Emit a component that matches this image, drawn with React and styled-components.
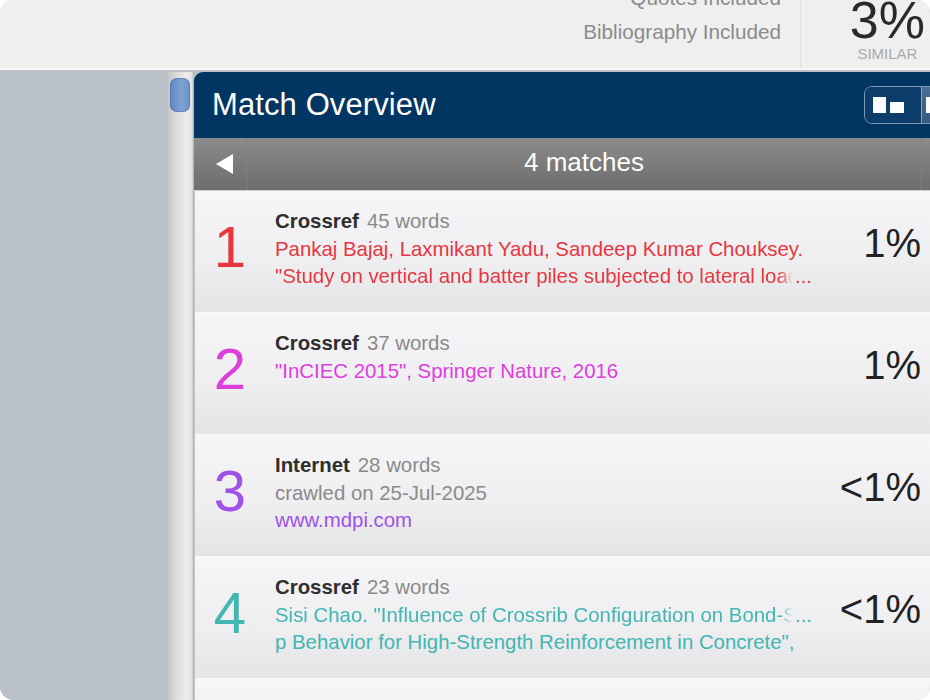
import styled, { createGlobalStyle } from "styled-components";

const GlobalStyle = createGlobalStyle`
    html, body {
        margin:0;
        padding:0;
        background:#ffffff;
    }
    body {
        font-family:"Liberation Sans", Arial, sans-serif;
    }
`;

const Frame = styled.div`
    width:930px;
    height:700px;
    border-radius:14px;
    overflow:hidden;
    display:flex;
    flex-direction:column;
    background:#b9c0c8;
`;

const TopBar = styled.div`
    height:68px;
    flex-shrink:0;
    display:flex;
    justify-content:flex-end;
    align-items:flex-end;
    background:#efefef;
    border-bottom:2px solid #f8f8f8;
    overflow:hidden;
`;

const Filters = styled.div`
    display:flex;
    flex-direction:column;
    align-items:flex-end;
    padding-right:19px;
    padding-bottom:19px;
`;

const FilterLine = styled.div`
    font-size:20.7px;
    line-height:34px;
    color:#8b8b8b;
    white-space:nowrap;
`;

const Score = styled.div`
    width:130px;
    height:100%;
    display:flex;
    justify-content:flex-end;
    align-items:flex-end;
    border-left:1px solid #e2e2e2;
    padding-right:5px;
    padding-bottom:6px;
    box-sizing:border-box;
`;

const ScoreInner = styled.div`
    display:flex;
    flex-direction:column;
    align-items:center;
`;

const ScoreValue = styled.div`
    font-size:52px;
    line-height:52px;
    color:#2a2a2a;
`;

const ScoreLabel = styled.div`
    font-size:15px;
    line-height:16px;
    color:#a9a9a9;
`;

const Body = styled.div`
    flex:1;
    display:flex;
    min-height:0;
    padding-top:2px;
`;

const SideArea = styled.div`
    width:168px;
    flex-shrink:0;
    background:#b9c0c8;
`;

const Track = styled.div`
    position:relative;
    width:26px;
    flex-shrink:0;
    background:linear-gradient(to right, #c6c6c6 0%, #dedede 35%, #ececec 70%, #e2e2e2 92%, #a8a8a8 100%);
`;

const Thumb = styled.div`
    position:absolute;
    left:2px;
    top:6px;
    width:20px;
    height:34px;
    border-radius:7px;
    background:linear-gradient(to right, #5f87c0, #7ea2d4 55%, #6c92c9);
    box-shadow:inset 0 0 0 1px rgba(60,90,140,0.35);
`;

const Panel = styled.div`
    flex:1;
    display:flex;
    flex-direction:column;
    min-width:0;
    overflow:hidden;
`;

const PanelHeader = styled.div`
    height:66px;
    flex-shrink:0;
    display:flex;
    align-items:center;
    justify-content:space-between;
    background:#013562;
    border-top-left-radius:9px;
    padding-left:18px;
`;

const PanelTitle = styled.div`
    font-size:31px;
    color:#ffffff;
    letter-spacing:0.1px;
`;

const Toggle = styled.div`
    display:flex;
    height:38px;
    width:80px;
    margin-right:-14px;
    border:1.5px solid #7d97b4;
    border-radius:8px;
    overflow:hidden;
    box-sizing:border-box;
`;

const ToggleSeg = styled.div`
    width:${p => p.$w}px;
    flex-shrink:0;
    display:flex;
    align-items:center;
    padding-left:${p => p.$pad}px;
    gap:4px;
    background:${p => p.$active ? "linear-gradient(#4b6e95, #36597f)" : "#0c3c69"};
    border-right:${p => p.$active ? "none" : "1px solid #8aa2bd"};
`;

const Block = styled.div`
    width:${p => p.$w}px;
    height:${p => p.$h}px;
    margin-top:${p => p.$mt || 0}px;
    background:#ffffff;
`;

const NavBar = styled.div`
    height:52px;
    flex-shrink:0;
    display:flex;
    align-items:stretch;
    background:linear-gradient(#8b8b8b, #6d6d6d);
    border-bottom:1px solid #cfcfcf;
`;

const NavBack = styled.div`
    width:53px;
    display:flex;
    align-items:center;
    padding-left:22px;
    box-sizing:border-box;
    border-right:1px solid #808080;
`;

const BackArrow = styled.div`
    width:0;
    height:0;
    border-top:10px solid transparent;
    border-bottom:10px solid transparent;
    border-right:17px solid #ffffff;
`;

const NavTitle = styled.div`
    flex:1;
    display:flex;
    align-items:center;
    justify-content:center;
    font-size:26px;
    color:#ffffff;
    padding-bottom:4px;
    border-right:1px solid #808080;
`;

const NavEnd = styled.div`
    width:8px;
`;

const Rows = styled.div`
    flex:1;
    display:flex;
    flex-direction:column;
    border-left:1px solid #c4c4c4;
`;

const Row = styled.div`
    height:121px;
    flex-shrink:0;
    display:flex;
    background:linear-gradient(#f6f6f8, #eeeef0 60%, #e3e4e6);
    border-bottom:1px solid #fbfbfb;
`;

const Num = styled.div`
    width:70px;
    flex-shrink:0;
    text-align:center;
    font-size:58px;
    line-height:58px;
    padding-top:27px;
    color:${p => p.$color};
`;

const Info = styled.div`
    width:537px;
    flex-shrink:0;
    margin-left:10px;
    padding-top:17px;
    font-size:20.4px;
    line-height:27.5px;
`;

const Line = styled.div`
    display:flex;
    white-space:nowrap;
    color:${p => p.$color || "#8a8a8a"};
`;

const Source = styled.span`
    font-weight:bold;
    color:#2e2e2e;
    margin-right:8px;
`;

const Words = styled.span`
    color:#8a8a8a;
`;

const Clip = styled.span`
    flex:1;
    min-width:0;
    overflow:hidden;
    -webkit-mask-image:linear-gradient(to right, #000 calc(100% - 14px), transparent);
    mask-image:linear-gradient(to right, #000 calc(100% - 14px), transparent);
`;

const Dots = styled.span`
    flex-shrink:0;
    margin-left:2px;
`;

const Percent = styled.div`
    flex:1;
    text-align:right;
    padding-right:9px;
    padding-top:32px;
    font-size:40px;
    line-height:40px;
    color:#222222;
`;

const matches = [
    {
        n: 1,
        color: "#e8363f",
        source: "Crossref",
        words: "45 words",
        pct: "1%",
        lines: [
            { text: "Pankaj Bajaj, Laxmikant Yadu, Sandeep Kumar Chouksey.", color: "#e8363f" },
            { text: "\"Study on vertical and batter piles subjected to lateral load", color: "#e8363f", cut: true },
        ],
    },
    {
        n: 2,
        color: "#dd3edc",
        source: "Crossref",
        words: "37 words",
        pct: "1%",
        lines: [
            { text: "\"InCIEC 2015\", Springer Nature, 2016", color: "#dd3edc" },
        ],
    },
    {
        n: 3,
        color: "#a052e6",
        source: "Internet",
        words: "28 words",
        pct: "<1%",
        lines: [
            { text: "crawled on 25-Jul-2025" },
            { text: "www.mdpi.com", color: "#a052e6" },
        ],
    },
    {
        n: 4,
        color: "#42b6b1",
        source: "Crossref",
        words: "23 words",
        pct: "<1%",
        lines: [
            { text: "Sisi Chao. \"Influence of Crossrib Configuration on Bond-Slip", color: "#42b6b1", cut: true },
            { text: "p Behavior for High-Strength Reinforcement in Concrete\",", color: "#42b6b1" },
        ],
    },
];

const MatchRow = ({ m }) => (
    <Row>
        <Num $color={m.color}>{m.n}</Num>
        <Info>
            <Line>
                <Source>{m.source}</Source>
                <Words>{m.words}</Words>
            </Line>
            {m.lines.map((l, i) => (
                <Line key={i} $color={l.color}>
                    {l.cut ? (
                        <>
                            <Clip>{l.text}</Clip>
                            <Dots>...</Dots>
                        </>
                    ) : l.text}
                </Line>
            ))}
        </Info>
        <Percent>{m.pct}</Percent>
    </Row>
);

const App = () => {
    return (<>
        <GlobalStyle />
        <Frame>
            <TopBar>
                <Filters>
                    <FilterLine>Quotes Included</FilterLine>
                    <FilterLine>Bibliography Included</FilterLine>
                </Filters>
                <Score>
                    <ScoreInner>
                        <ScoreValue>3%</ScoreValue>
                        <ScoreLabel>SIMILAR</ScoreLabel>
                    </ScoreInner>
                </Score>
            </TopBar>
            <Body>
                <SideArea />
                <Track>
                    <Thumb />
                </Track>
                <Panel>
                    <PanelHeader>
                        <PanelTitle>Match Overview</PanelTitle>
                        <Toggle>
                            <ToggleSeg $w={48} $pad={8}>
                                <Block $w={13} $h={16} />
                                <Block $w={14} $h={11} $mt={5} />
                            </ToggleSeg>
                            <ToggleSeg $w={40} $pad={4} $active>
                                <Block $w={5} $h={16} />
                            </ToggleSeg>
                        </Toggle>
                    </PanelHeader>
                    <NavBar>
                        <NavBack>
                            <BackArrow />
                        </NavBack>
                        <NavTitle>4 matches</NavTitle>
                        <NavEnd />
                    </NavBar>
                    <Rows>
                        {matches.map(m => <MatchRow key={m.n} m={m} />)}
                        <Row />
                    </Rows>
                </Panel>
            </Body>
        </Frame>
    </>);
};

export default App;
